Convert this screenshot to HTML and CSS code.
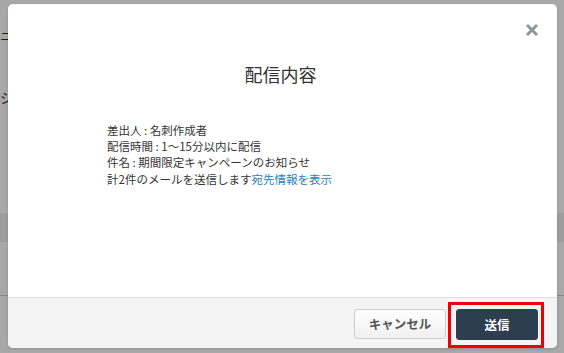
FILE: index.html
```html
<!DOCTYPE html>
<html lang="ja">
<head>
<meta charset="utf-8">
<link rel="stylesheet" href="styles.css">
</head>
<body>
<div class="page">
  <div class="page-head">ニュース配信</div>
  <div class="page-sub">ジョブ一覧</div>
  <div class="page-band"></div>
  <div class="page-rule"></div>
</div>
<div class="overlay"></div>
<div class="modal">
  <button class="close" aria-label="close">
    <svg width="14" height="14" viewBox="0 0 14 14"><path d="M2 2 L12 12 M12 2 L2 12" stroke="#8d969e" stroke-width="3" stroke-linecap="butt"/></svg>
  </button>
  <div class="modal-header">
    <h1 class="title">配信内容</h1>
  </div>
  <div class="modal-body">
    <p class="line">差出人 : 名刺作成者</p>
    <p class="line">配信時間 : 1～15分以内に配信</p>
    <p class="line">件名 : 期間限定キャンペーンのお知らせ</p>
    <p class="line">計2件のメールを送信します<a class="link" href="#">宛先情報を表示</a></p>
  </div>
  <div class="modal-footer">
    <button class="btn btn-cancel">キャンセル</button>
    <button class="btn btn-send">送信</button>
  </div>
</div>
</body>
</html>
```

FILE: styles.css
```css
html, body {
  margin: 0;
  padding: 0;
}
body {
  width: 564px;
  height: 353px;
  overflow: hidden;
  position: relative;
  background: #ffffff;
  font-family: "Noto Sans CJK JP", "Noto Sans", sans-serif;
}
.page {
  display: flex;
  flex-direction: column;
  height: 353px;
}
.page-head {
  height: 16px;
  margin-top: 28px;
  font-size: 12px;
  line-height: 16px;
  color: #333;
  white-space: nowrap;
}
.page-sub {
  margin-top: 44px;
  height: 18px;
  font-size: 14px;
  line-height: 18px;
  color: #333;
  white-space: nowrap;
}
.page-band {
  margin-top: 107px;
  height: 29px;
  background: #eeeeee;
}
.page-rule {
  margin-top: 53px;
  height: 1px;
  background: #cccccc;
}
.overlay {
  position: absolute;
  inset: 0;
  background: rgba(0, 0, 0, 0.34);
}
.modal {
  position: absolute;
  left: 8px;
  top: 4px;
  width: 549px;
  height: 344px;
  background: #ffffff;
  border-radius: 5px;
  overflow: hidden;
  display: flex;
  flex-direction: column;
  box-shadow: 0 1px 3px rgba(0, 0, 0, 0.15);
}
.close {
  position: absolute;
  top: 19px;
  right: 18px;
  width: 14px;
  height: 14px;
  padding: 0;
  border: 0;
  background: none;
  display: block;
}
.close svg {
  display: block;
}
.modal-header {
  padding-top: 58px;
  text-align: center;
}
.title {
  margin: 0;
  font-size: 18px;
  line-height: 24px;
  font-weight: normal;
  color: #333333;
  padding-right: 4px;
}
.modal-body {
  margin-top: 36px;
  padding-left: 99px;
}
.line {
  margin: 0;
  font-size: 11.5px;
  line-height: 16.2px;
  color: #333333;
}
.link {
  color: #1f80b8;
  text-decoration: none;
}
.modal-footer {
  margin-top: auto;
  height: 39px;
  padding: 11px 19px 0 0;
  border-top: 1px solid #dddddd;
  background: #f4f4f4;
  display: flex;
  justify-content: flex-end;
  align-items: flex-start;
  gap: 10px;
}
.btn {
  font-family: "Noto Sans CJK JP", sans-serif;
  font-size: 12.5px;
  font-weight: bold;
  border-radius: 3px;
  padding: 0;
  line-height: 16px;
}
.btn-cancel {
  width: 92px;
  height: 30px;
  color: #555555;
  background: linear-gradient(#ffffff, #f0f0f0);
  border: 1px solid #cccccc;
}
.btn-send {
  position: relative;
  width: 82px;
  height: 31px;
  color: #ffffff;
  background: #2d3e50;
  border: 1px solid #2d3e50;
}
.btn-send::after {
  content: "";
  position: absolute;
  top: -8px;
  right: -7px;
  bottom: -9px;
  left: -9px;
  border: 3px solid #ee0000;
}
```
